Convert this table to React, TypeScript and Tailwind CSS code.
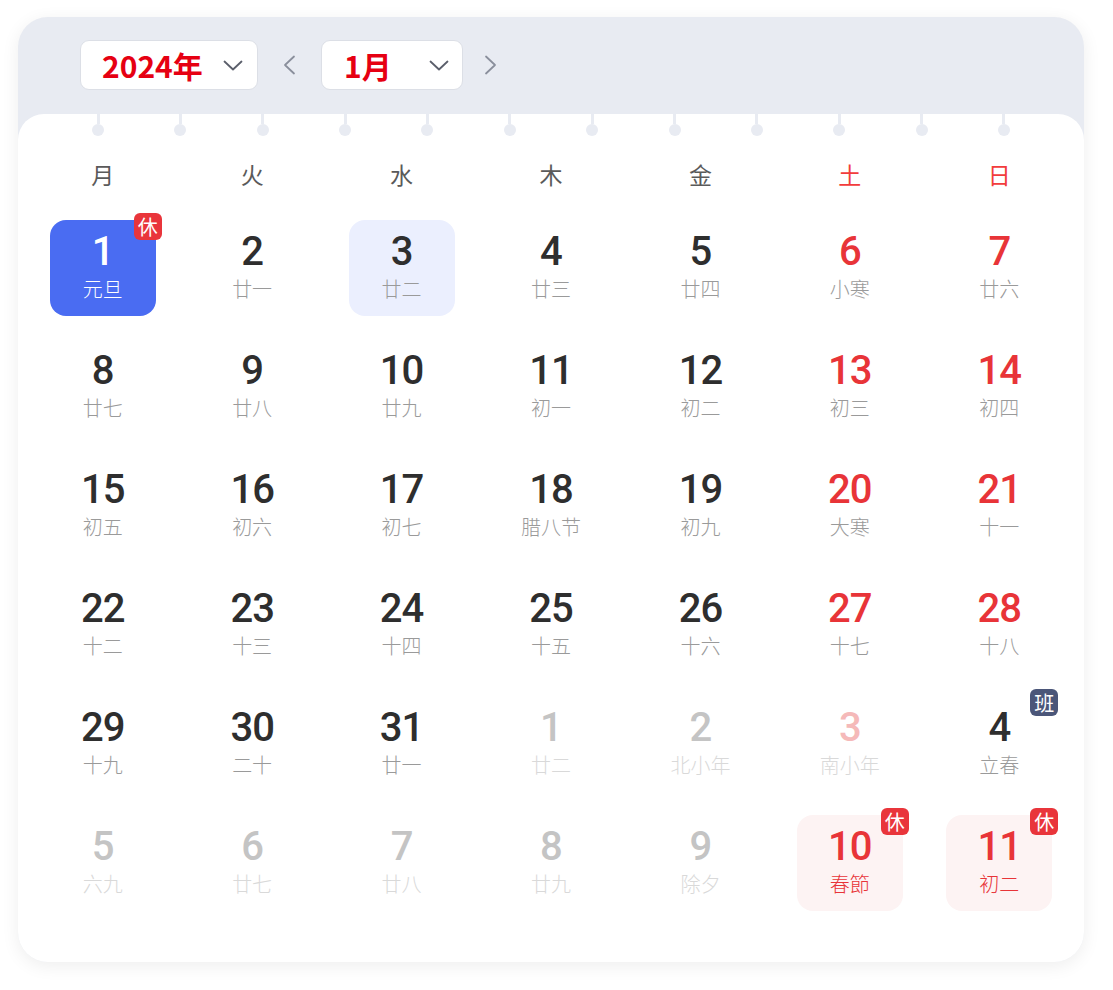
import React from 'react';

type Day = {
  n: number;
  lunar: string;
  kind?: 'selected' | 'today' | 'muted' | 'mutedRed' | 'holiday';
  red?: boolean;
  badge?: '休' | '班';
};

const weekdays = ['月', '火', '水', '木', '金', '土', '日'];

const days: Day[] = [
  { n: 1, lunar: '元旦', kind: 'selected', badge: '休' },
  { n: 2, lunar: '廿一' },
  { n: 3, lunar: '廿二', kind: 'today' },
  { n: 4, lunar: '廿三' },
  { n: 5, lunar: '廿四' },
  { n: 6, lunar: '小寒', red: true },
  { n: 7, lunar: '廿六', red: true },
  { n: 8, lunar: '廿七' },
  { n: 9, lunar: '廿八' },
  { n: 10, lunar: '廿九' },
  { n: 11, lunar: '初一' },
  { n: 12, lunar: '初二' },
  { n: 13, lunar: '初三', red: true },
  { n: 14, lunar: '初四', red: true },
  { n: 15, lunar: '初五' },
  { n: 16, lunar: '初六' },
  { n: 17, lunar: '初七' },
  { n: 18, lunar: '腊八节' },
  { n: 19, lunar: '初九' },
  { n: 20, lunar: '大寒', red: true },
  { n: 21, lunar: '十一', red: true },
  { n: 22, lunar: '十二' },
  { n: 23, lunar: '十三' },
  { n: 24, lunar: '十四' },
  { n: 25, lunar: '十五' },
  { n: 26, lunar: '十六' },
  { n: 27, lunar: '十七', red: true },
  { n: 28, lunar: '十八', red: true },
  { n: 29, lunar: '十九' },
  { n: 30, lunar: '二十' },
  { n: 31, lunar: '廿一' },
  { n: 1, lunar: '廿二', kind: 'muted' },
  { n: 2, lunar: '北小年', kind: 'muted' },
  { n: 3, lunar: '南小年', kind: 'mutedRed' },
  { n: 4, lunar: '立春', badge: '班' },
  { n: 5, lunar: '六九', kind: 'muted' },
  { n: 6, lunar: '廿七', kind: 'muted' },
  { n: 7, lunar: '廿八', kind: 'muted' },
  { n: 8, lunar: '廿九', kind: 'muted' },
  { n: 9, lunar: '除夕', kind: 'muted' },
  { n: 10, lunar: '春節', kind: 'holiday', badge: '休' },
  { n: 11, lunar: '初二', kind: 'holiday', badge: '休' },
];

const cjk = "font-['Noto_Sans_CJK_SC','Noto_Sans',sans-serif]";
const num = "font-['Roboto','Liberation_Sans',sans-serif]";

function Chevron({ dir }: { dir: 'down' | 'left' | 'right' }) {
  if (dir === 'down') {
    return (
      <svg width="20" height="11" viewBox="0 0 20 11" fill="none">
        <polyline points="1.5,1.5 10,9.5 18.5,1.5" stroke="#5b5f6b" strokeWidth="1.8" strokeLinecap="round" strokeLinejoin="round" />
      </svg>
    );
  }
  return (
    <svg width="13" height="20" viewBox="0 0 13 20" fill="none">
      <polyline
        points={dir === 'left' ? '11,1.5 2,10 11,18.5' : '2,1.5 11,10 2,18.5'}
        stroke="#8a8f9c"
        strokeWidth="1.8"
        strokeLinecap="round"
        strokeLinejoin="round"
      />
    </svg>
  );
}

function Badge({ t }: { t: '休' | '班' }) {
  return (
    <span
      className={`absolute -top-[7px] -right-[6px] flex h-[27px] w-[28px] items-center justify-center rounded-[6px] text-[20px] leading-none text-white ${cjk} ${
        t === '休' ? 'bg-[#e9353b]' : 'bg-[#4b5679]'
      }`}
    >
      {t}
    </span>
  );
}

function Cell({ d }: { d: Day }) {
  let box = '';
  let numCls = 'text-[#2e2e2e]';
  let lunarCls = 'text-[#9a9a9a]';
  if (d.red) numCls = 'text-[#e83438]';
  if (d.kind === 'selected') {
    box = 'bg-[#4a6cf2]';
    numCls = 'text-white';
    lunarCls = 'text-white';
  } else if (d.kind === 'today') {
    box = 'bg-[#ebeffe]';
  } else if (d.kind === 'muted') {
    numCls = 'text-[#c4c4c4]';
    lunarCls = 'text-[#d9d9d9]';
  } else if (d.kind === 'mutedRed') {
    numCls = 'text-[#f5b9b9]';
    lunarCls = 'text-[#d9d9d9]';
  } else if (d.kind === 'holiday') {
    box = 'bg-[#fdf3f3]';
    numCls = 'text-[#e83438]';
    lunarCls = 'text-[#e83438]';
  }
  return (
    <div className="flex justify-center">
      <div className={`relative flex h-[96px] w-[106px] flex-col items-center rounded-[16px] pt-[14px] ${box}`}>
        <span className={`text-[40px] leading-[36px] font-medium tracking-[-1px] ${num} ${numCls}`}>{d.n}</span>
        <span className={`mt-[7px] text-[20px] leading-[24px] font-light ${cjk} ${lunarCls}`}>{d.lunar}</span>
        {d.badge && <Badge t={d.badge} />}
      </div>
    </div>
  );
}

export default function App() {
  return (
    <div className="min-h-[990px] bg-white pt-[17px]">
      <div className="ml-[18px] w-[1066px] overflow-hidden rounded-[30px] bg-[#e8ebf2] shadow-[0_4px_18px_rgba(0,0,0,0.07)]">
        {/* toolbar */}
        <div className="flex h-[97px] items-start pt-[23px] pl-[62px]">
          <div className="flex h-[50px] w-[178px] items-center justify-between rounded-[9px] border border-[#dcdfe6] bg-white pl-[21px] pr-[14px]">
            <span className={`text-[30px] font-bold text-[#e60012] ${cjk}`}>2024年</span>
            <Chevron dir="down" />
          </div>
          <div className="flex h-[50px] w-[63px] items-center justify-center">
            <Chevron dir="left" />
          </div>
          <div className="flex h-[50px] w-[142px] items-center justify-between rounded-[9px] border border-[#dcdfe6] bg-white pl-[22px] pr-[13px]">
            <span className={`text-[30px] font-bold text-[#e60012] ${cjk}`}>1月</span>
            <Chevron dir="down" />
          </div>
          <div className="flex h-[50px] w-[54px] items-center justify-center">
            <Chevron dir="right" />
          </div>
        </div>

        {/* sheet */}
        <div className="rounded-t-[26px] bg-white px-[10px] pb-[51px]">
          <div className="flex justify-between px-[64px]">
            {Array.from({ length: 12 }).map((_, i) => (
              <div key={i} className="flex w-[12px] flex-col items-center">
                <div className="h-[10px] w-[3px] bg-[#e8ebf2]" />
                <div className="h-[12px] w-[12px] rounded-full bg-[#e8ebf2]" />
              </div>
            ))}
          </div>

          <div className="mt-[18px] mb-[26px] grid h-[40px] grid-cols-7 items-center">
            {weekdays.map((w, i) => (
              <div key={w} className={`text-center text-[23px] ${cjk} ${i >= 5 ? 'text-[#f23c3c]' : 'text-[#5a5a5a]'}`}>
                {w}
              </div>
            ))}
          </div>

          <div className="grid grid-cols-7 gap-y-[23px]">
            {days.map((d, i) => (
              <Cell key={i} d={d} />
            ))}
          </div>
        </div>
      </div>
    </div>
  );
}
